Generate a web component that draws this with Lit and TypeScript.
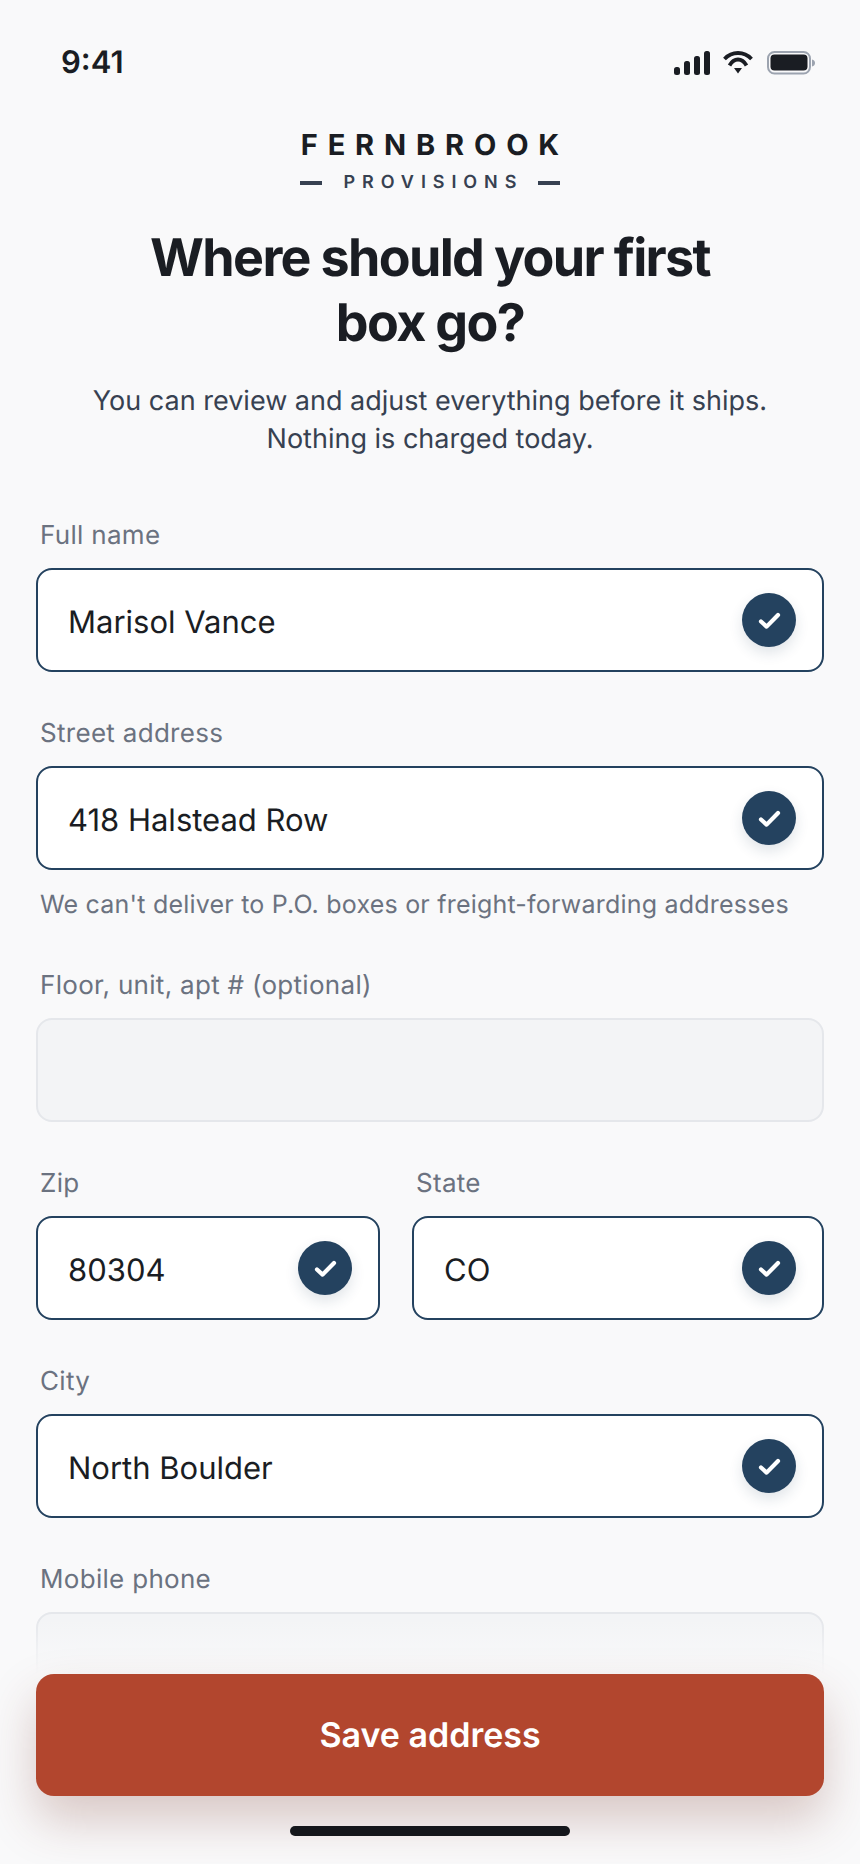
import { LitElement, html, css } from "lit";
import { customElement } from "lit/decorators.js";

const check = html`<span class="check"><svg width="54" height="54" viewBox="0 0 54 54" fill="none"><path d="M19 28.5 L24.6 33.6 L36 22" stroke="#fff" stroke-width="4.2" stroke-linecap="round" stroke-linejoin="round"/></svg></span>`;

@customElement("app-root")
export class AppRoot extends LitElement {
  static styles = css`
    :host { display: block; width: 860px; height: 1864px; position: relative; overflow: hidden; background: #f9f9fa; font-family: Inter, "Liberation Sans", sans-serif; color: #1a1d23; text-rendering: geometricPrecision; -webkit-font-smoothing: antialiased; }
    .status { display: flex; justify-content: space-between; align-items: center; padding: 46px 45px 0 61px; height: 34px; }
    .time { font-size: 31px; font-weight: 600; line-height: 34px; }
    .icons { display: flex; align-items: center; gap: 13px; }
    .icons svg { display: block; }
    .icons .batt { margin-left: 1px; }
    .logo { display: flex; flex-direction: column; align-items: center; margin-top: 47px; }
    .brand { font-size: 29px; font-weight: 700; letter-spacing: 0.34em; margin-right: -0.34em; line-height: 35px; }
    .sub { display: flex; align-items: center; gap: 22px; margin-top: 10px; }
    .sub i { display: block; width: 22px; height: 4px; background: #374151; }
    .sub span { font-size: 18px; font-weight: 600; color: #374151; letter-spacing: 0.385em; margin-right: -0.385em; line-height: 22px; }
    h1 { margin: 31px 0 0; text-align: center; font-size: 52px; line-height: 65px; font-weight: 700; letter-spacing: -0.032em; }
    .lead { margin: 27px 0 0; text-align: center; font-size: 27px; line-height: 38px; color: #374151; }
    form { display: flex; flex-direction: column; padding: 0 36px; margin-top: 61px; gap: 45.3px; }
    .field { display: flex; flex-direction: column; min-width: 0; }
    label { font-size: 26px; line-height: 33px; letter-spacing: 0.3px; color: #6b7280; padding-left: 4px; margin-bottom: 16px; }
    .box { height: 104px; box-sizing: border-box; border-radius: 16px; border: 2px solid #24425f; background: #fff; display: flex; align-items: center; justify-content: space-between; padding: 5px 26px 0 30px; font-size: 31px; color: #1a1d23; }
    .box.empty { border-color: #e5e7eb; background: #f3f4f6; }
    .check { width: 54px; height: 54px; border-radius: 50%; background: #24425f; box-shadow: 0 6px 14px rgba(36, 66, 95, 0.14); margin-top: -5px; }
    .check svg { display: block; }
    .hint { font-size: 25px; line-height: 33px; letter-spacing: 0.21px; color: #6b7280; padding-left: 4px; margin-top: 19px; margin-bottom: 1px; }
    .row { display: grid; grid-template-columns: 344px 1fr; gap: 32px; }
    .footer { position: absolute; left: 0; right: 0; bottom: 0; height: 244px; padding: 0 36px; box-sizing: border-box; background: linear-gradient(to bottom, rgba(249, 249, 250, 0), #f9f9fa 54px); display: flex; flex-direction: column; }
    button { margin-top: 54px; height: 122px; flex: none; border: none; border-radius: 18px; background: #b2462e; color: #fff; font: 600 34px Inter, "Liberation Sans", sans-serif; text-rendering: geometricPrecision; box-shadow: 0 24px 48px rgba(120, 50, 40, 0.25); }
    .home { position: absolute; left: 290px; top: 206px; width: 280px; height: 10px; border-radius: 5px; background: #14161b; }
  `;

  render() {
    return html`
      <div class="status">
        <span class="time">9:41</span>
        <span class="icons">
          <svg width="36" height="24" viewBox="0 0 36 24" fill="#1a1d23">
            <rect x="0" y="16" width="6" height="8" rx="2.5"/><rect x="10" y="10" width="6" height="14" rx="2.5"/><rect x="20" y="5" width="6" height="19" rx="2.5"/><rect x="30" y="0" width="6" height="24" rx="2.5"/>
          </svg>
          <svg width="30" height="24" viewBox="0 0 30 24" fill="none" stroke="#1a1d23" stroke-width="3.8">
            <path d="M1.5 8 C9 0 21 0 28.5 8"/><path d="M6.5 14.5 C11 6.5 19 6.5 23.5 14.5" /><path d="M11 17 L19 17 L15 22.5 Z" fill="#1a1d23" stroke="none"/>
          </svg>
          <svg class="batt" width="48" height="24" viewBox="0 0 48 24" fill="none">
            <rect x="1" y="1" width="42" height="21.5" rx="6.5" stroke="#9ca3af" stroke-width="2"/><rect x="3.5" y="3.5" width="37" height="16" rx="4" fill="#1a1d23"/><path d="M45 8.5 C47 9 48 10 48 12 C48 14 47 15 45 15.5 Z" fill="#9ca3af"/>
          </svg>
        </span>
      </div>
      <div class="logo">
        <div class="brand">FERNBROOK</div>
        <div class="sub"><i></i><span>PROVISIONS</span><i></i></div>
      </div>
      <h1>Where should your first<br />box go?</h1>
      <p class="lead">You can review and adjust everything before it ships.<br />Nothing is charged today.</p>
      <form>
        <div class="field"><label>Full name</label><div class="box">Marisol Vance${check}</div></div>
        <div class="field"><label>Street address</label><div class="box">418 Halstead Row${check}</div>
          <div class="hint">We can't deliver to P.O. boxes or freight-forwarding addresses</div></div>
        <div class="field"><label>Floor, unit, apt # (optional)</label><div class="box empty"></div></div>
        <div class="row">
          <div class="field"><label>Zip</label><div class="box">80304${check}</div></div>
          <div class="field"><label>State</label><div class="box">CO${check}</div></div>
        </div>
        <div class="field"><label>City</label><div class="box">North Boulder${check}</div></div>
        <div class="field"><label>Mobile phone</label><div class="box empty"></div></div>
      </form>
      <div class="footer">
        <button type="button">Save address</button>
        <div class="home"></div>
      </div>
    `;
  }
}
